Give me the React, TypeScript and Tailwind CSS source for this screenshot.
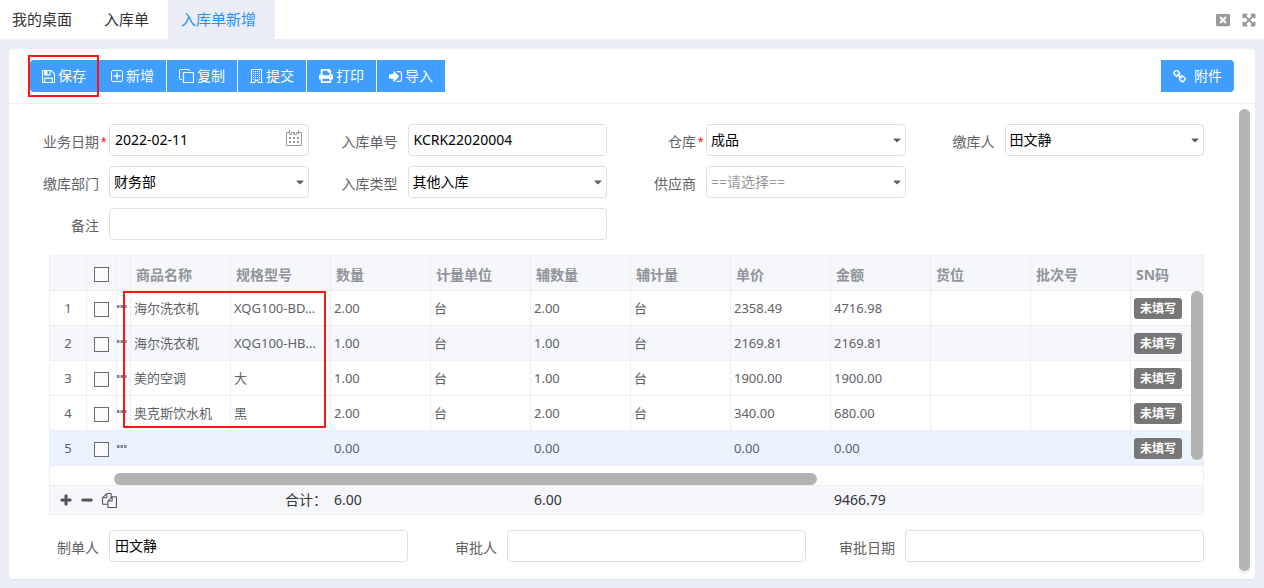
import type { ReactNode } from "react";
import { FaCaretDown, FaExpandArrowsAlt, FaMinus, FaPlus, FaPrint, FaWindowClose } from "react-icons/fa";

const SaveIcon = () => (
  <svg viewBox="128 128 1536 1536" className="h-[13px] w-[13px]" fill="currentColor" aria-hidden="true">
    <path d="M512 1536h768v-384h-768v384zm896 0h128v-896q0-14-10-38.5t-20-34.5l-281-281q-10-10-34-20t-39-10v416q0 40-28 68t-68 28h-576q-40 0-68-28t-28-68v-416h-128v1280h128v-416q0-40 28-68t68-28h832q40 0 68 28t28 68v416zm-384-928v-320q0-13-9.5-22.5t-22.5-9.5h-192q-13 0-22.5 9.5t-9.5 22.5v320q0 13 9.5 22.5t22.5 9.5h192q13 0 22.5-9.5t9.5-22.5zm640 32v928q0 40-28 68t-68 28h-1344q-40 0-68-28t-28-68v-1344q0-40 28-68t68-28h928q40 0 88 20t76 48l280 280q28 28 48 76t20 88z" />
  </svg>
);

const AddIcon = () => (
  <svg viewBox="0 0 12 12" className="h-3 w-3" fill="none" stroke="currentColor" aria-hidden="true">
    <rect x="0.5" y="0.5" width="11" height="11" rx="1.5" />
    <path d="M6 2.500v7M2.500 6h7" strokeWidth="1.3" />
  </svg>
);

const CopyIcon = () => (
  <svg viewBox="0 0 15 14" className="h-3.5 w-[15px]" fill="none" stroke="currentColor" aria-hidden="true">
    <path d="M3 10.5H1.5a1 1 0 0 1-1-1v-8a1 1 0 0 1 1-1h8a1 1 0 0 1 1 1V2" />
    <rect x="4.5" y="3.5" width="10" height="10" rx="0.5" strokeWidth="1.2" />
  </svg>
);

const BuildingIcon = () => (
  <svg viewBox="0 0 13 14" className="h-3.5 w-[13px]" fill="none" stroke="currentColor" aria-hidden="true">
    <path d="M1.5 13.500V0.5h10v13M0 13.5h5v-2h3v2h5" />
    <path d="M3 2.500h7M3 4.500h7M3 6.500h7M3 8.500h7M3 10.500h7" strokeDasharray="1 1" />
  </svg>
);

const ImportIcon = () => (
  <svg viewBox="128 128 1536 1536" className="h-[13px] w-[13px]" fill="currentColor" aria-hidden="true">
    <path d="M1312 896q0 26-19 45l-544 544q-19 19-45 19t-45-19-19-45v-288h-448q-26 0-45-19t-19-45v-384q0-26 19-45t45-19h448v-288q0-26 19-45t45-19 45 19l544 544q19 19 19 45zm352-352v704q0 119-84.5 203.5t-203.5 84.5h-320q-13 0-22.5-9.5t-9.5-22.5q0-4-1-20t-.5-26.5 3-23.5 10-19.5 20.5-6.5h320q66 0 113-47t47-113v-704q0-66-47-113t-113-47h-312l-11.5-1-11.5-3-8-5.5-7-9-2-13.5q0-4-1-20t-.5-26.5 3-23.5 10-19.5 20.5-6.5h320q119 0 203.5 84.5t84.5 203.5z" />
  </svg>
);

const LinkIcon = () => (
  <svg viewBox="64 64 1664 1664" className="h-[13px] w-[13px]" fill="currentColor" aria-hidden="true">
    <path d="M1520 1216q0-40-28-68l-208-208q-28-28-68-28-42 0-72 32 3 3 19 18.5t21.5 21.5 15 19 13 25.5 3.5 27.5q0 40-28 68t-68 28q-15 0-27.5-3.5t-25.5-13-19-15-21.5-21.5-18.5-19q-33 31-33 73 0 40 28 68l206 207q27 27 68 27 40 0 68-26l147-146q28-28 28-67zm-703-705q0-40-28-68l-206-207q-28-28-68-28-39 0-68 27l-147 146q-28 28-28 67 0 40 28 68l208 208q27 27 68 27 42 0 72-31-3-3-19-18.5t-21.5-21.5-15-19-13-25.5-3.5-27.5q0-40 28-68t68-28q15 0 27.5 3.5t25.5 13 19 15 21.5 21.5 18.5 19q33-31 33-73zm895 705q0 120-85 203l-147 146q-83 83-203 83-121 0-204-85l-206-207q-83-83-83-203 0-123 88-209l-88-88q-86 88-208 88-120 0-204-84l-208-208q-84-84-84-204t85-203l147-146q83-83 203-83 121 0 204 85l206 207q83 83 83 203 0 123-88 209l88 88q86-88 208-88 120 0 204 84l208 208q84 84 84 204z" />
  </svg>
);

const FilesIcon = () => (
  <svg viewBox="0 0 1792 1792" className="h-[15px] w-[15px]" fill="currentColor" aria-hidden="true">
    <path d="M1696 384q40 0 68 28t28 68v1216q0 40-28 68t-68 28h-960q-40 0-68-28t-28-68v-288h-544q-40 0-68-28t-28-68v-672q0-40 20-88t48-76l408-408q28-28 76-48t88-20h416q40 0 68 28t28 68v328q68-40 128-40h416zm-544 213l-299 299h299v-299zm-640-384l-299 299h299v-299zm196 647l316-316v-416h-384v416q0 40-28 68t-68 28h-416v640h512v-256q0-40 20-88t48-76zm956 804v-1152h-384v416q0 40-28 68t-68 28h-416v640h896z" />
  </svg>
);

const CalendarIcon = () => (
  <svg viewBox="0 0 16 16" className="h-4 w-4" fill="none" stroke="#999" aria-hidden="true">
    <path d="M3 2.500H.5v13h15v-13H13M3.500 4.500h2v-2h2v2M8.500 4.500h2v-2h2M3.500 0v4.500M8.500 2v2.500M12.500 0v4.500M7.500 2.500h1" />
    <path d="M3 8h10M3 12h10" strokeWidth="2" strokeDasharray="2 2" />
  </svg>
);

const tools: { label: string; icon: ReactNode }[] = [
  { label: "保存", icon: <SaveIcon /> },
  { label: "新增", icon: <AddIcon /> },
  { label: "复制", icon: <CopyIcon /> },
  { label: "提交", icon: <BuildingIcon /> },
  { label: "打印", icon: <FaPrint size={14} /> },
  { label: "导入", icon: <ImportIcon /> },
];

const columns = ["商品名称", "规格型号", "数量", "计量单位", "辅数量", "辅计量", "单价", "金额", "货位", "批次号"];

const rows = [
  ["海尔洗衣机", "XQG100-BD...", "2.00", "台", "2.00", "台", "2358.49", "4716.98", "", ""],
  ["海尔洗衣机", "XQG100-HB...", "1.00", "台", "1.00", "台", "2169.81", "2169.81", "", ""],
  ["美的空调", "大", "1.00", "台", "1.00", "台", "1900.00", "1900.00", "", ""],
  ["奥克斯饮水机", "黑", "2.00", "台", "2.00", "台", "340.00", "680.00", "", ""],
  ["", "", "0.00", "", "0.00", "", "0.00", "0.00", "", ""],
];

const rowColors = ["bg-white", "bg-[#f5f7fb]", "bg-white", "bg-white", "bg-[#ebf3ff]"];

type FieldProps = {
  id: string;
  label: string;
  value?: string;
  required?: boolean;
  kind?: "text" | "date" | "select";
  muted?: boolean;
  className?: string;
};

function Field({ id, label, value = "", required, kind = "text", muted, className = "" }: FieldProps) {
  const box = "h-8 w-full rounded border border-[#dcdfe6] bg-white text-sm";
  return (
    <div className={`flex items-center ${className}`}>
      <label htmlFor={id} className="flex w-[99px] shrink-0 justify-end pt-1 text-sm text-[#606266]">
        {label}
        <span className="w-2.5 pl-0.5 font-['Liberation_Sans',sans-serif] text-[#f00]">{required ? "*" : ""}</span>
      </label>
      <div className="relative min-w-0 flex-1">
        {kind === "select" ? (
          <>
            <select
              id={id}
              defaultValue={value}
              className={`${box} appearance-none px-1 pb-px ${muted ? "text-[#999]" : "text-black"}`}
            >
              <option>{value}</option>
            </select>
            <FaCaretDown size={12} className="pointer-events-none absolute top-2.5 right-[3px] text-[#606060]" />
          </>
        ) : (
          <input id={id} type="text" defaultValue={value} className={`${box} px-[5px] pb-0.5 text-black`} />
        )}
        {kind === "date" && (
          <button type="button" aria-label="选择日期" className="absolute top-1.5 right-[7px]">
            <CalendarIcon />
          </button>
        )}
      </div>
    </div>
  );
}

function Check({ label }: { label: string }) {
  return (
    <input
      type="checkbox"
      aria-label={label}
      className="mx-auto mt-[3px] block h-[15px] w-[15px] appearance-none border border-[#6b6b6b] bg-[#fbfbfb]"
    />
  );
}

export default function App() {
  const cell = "border-r border-b border-[#ebeef5]";
  return (
    <div className="flex min-h-screen flex-col bg-[#eaedf6] font-['Noto_Sans','Noto_Sans_CJK_SC',sans-serif]">
      <header className="flex h-[39px] items-stretch justify-between bg-white text-[15px] text-[#333]">
        <nav className="flex">
          <a href="#desktop" className="flex items-center pr-4 pl-3">我的桌面</a>
          <a href="#list" className="flex items-center pr-[19px] pl-4">入库单</a>
          <a href="#new" aria-current="page" className="flex items-center bg-[#eaedf6] pr-[19px] pl-[13px] text-[#1e90ff]">
            入库单新增
          </a>
        </nav>
        <div className="flex items-center gap-3 pr-2 text-[#999]">
          <button type="button" aria-label="关闭"><FaWindowClose size={14} /></button>
          <button type="button" aria-label="全屏"><FaExpandArrowsAlt size={14} stroke="currentColor" strokeWidth={24} /></button>
        </div>
      </header>

      <main className="mx-[9px] mt-2.5 mb-[9px] flex flex-1 flex-col rounded bg-white shadow-[0_1px_1px_#dde1e8]">
        <div className="flex h-[55px] items-center justify-between border-b border-[#ebeef5] px-[21px]">
          <div className="relative flex gap-px">
            {tools.map((t) => (
              <button
                key={t.label}
                type="button"
                className="flex h-8 items-center gap-[3px] bg-[#409eff] px-3 text-sm text-white first:rounded-l"
              >
                {t.icon}
                {t.label}
              </button>
            ))}
            <div className="pointer-events-none absolute -top-[5px] -left-0.5 h-[42px] w-[71px] border-2 border-[#ff1414]" />
          </div>
          <button type="button" className="flex h-8 items-center gap-2 rounded-r bg-[#409eff] px-3 text-sm text-white">
            <LinkIcon />
            附件
          </button>
        </div>

        <div className="flex flex-1">
          <div className="min-w-0 flex-1 pt-5 pl-px">
            <form className="grid grid-cols-4 gap-y-2.5">
              <Field id="date" label="业务日期" value="2022-02-11" kind="date" required />
              <Field id="number" label="入库单号" value="KCRK22020004" />
              <Field id="store" label="仓库" value="成品" kind="select" required />
              <Field id="payer" label="缴库人" value="田文静" kind="select" />
              <Field id="dept" label="缴库部门" value="财务部" kind="select" />
              <Field id="type" label="入库类型" value="其他入库" kind="select" />
              <Field id="supplier" label="供应商" value="==请选择==" kind="select" muted />
              <Field id="note" label="备注" className="col-span-2 col-start-1" />
            </form>

            <div className="relative mt-[15px] ml-[39px]">
              <table className="w-full table-fixed border-separate border-spacing-0 border-t border-l border-[#ebeef5] text-left">
                <colgroup>
                  <col className="w-[37px]" />
                  <col className="w-[30px]" />
                  <col className="w-3.5" />
                  {columns.map((c) => (
                    <col key={c} className="w-[100px]" />
                  ))}
                  <col />
                </colgroup>
                <thead>
                  <tr className="h-[35px] bg-[#f5f7fb] text-sm text-[#909399]">
                    <th className={cell} />
                    <th className={cell}><Check label="全选" /></th>
                    <th className={cell} />
                    {columns.map((c) => (
                      <th key={c} className={`${cell} pt-1 pl-[5px] font-bold`}>{c}</th>
                    ))}
                    <th className={`${cell} pt-1 pl-[5px] font-bold`}>SN码</th>
                  </tr>
                </thead>
                <tbody className="text-[13px] text-[#606266]">
                  {rows.map((row, i) => (
                    <tr key={i} className={`h-[35px] ${rowColors[i]}`}>
                      <td className={`${cell} pt-0.5 text-center`}>{i + 1}</td>
                      <td className={cell}><Check label={`选择第${i + 1}行`} /></td>
                      <td className={cell}>
                        <button type="button" aria-label="更多" className="mb-[3px] block">
                          <svg viewBox="0 0 10 3" className="h-[3px] w-2.5" fill="#76869b" aria-hidden="true">
                            <path d="M0 0h2.500v3H0zM3.500 0H6v3H3.500zM7 0h2.500v3H7z" />
                          </svg>
                        </button>
                      </td>
                      {row.map((v, j) => (
                        <td key={j} className={`${cell} truncate pt-0.5 pl-[3px]`}>{v}</td>
                      ))}
                      <td className={`${cell} pl-[3px]`}>
                        <span className="block h-[21px] w-12 rounded-[3px] bg-[#777] text-center text-xs leading-[21px] font-bold text-white">
                          未填写
                        </span>
                      </td>
                    </tr>
                  ))}
                  <tr className="h-5">
                    <td colSpan={14} className={`${cell} p-0 align-bottom`}>
                      <div className="ml-16 h-3 w-[61%] rounded-full bg-[#b2b2b2]" />
                    </td>
                  </tr>
                </tbody>
                <tfoot>
                  <tr className="h-[29px] bg-[#f5f7fb] text-sm text-[#333]">
                    <td colSpan={4} className="border-b border-[#ebeef5]">
                      <div className="flex items-center gap-[9px] pl-2.5 text-[#555]">
                        <button type="button" aria-label="添加行"><FaPlus size={12} stroke="currentColor" strokeWidth={32} /></button>
                        <button type="button" aria-label="删除行"><FaMinus size={12} stroke="currentColor" strokeWidth={32} /></button>
                        <button type="button" aria-label="复制行"><FilesIcon /></button>
                      </div>
                    </td>
                    <td className="border-b border-[#ebeef5] pr-1 text-right">合计：</td>
                    <td className="border-b border-[#ebeef5] pl-[3px]">6.00</td>
                    <td className="border-b border-[#ebeef5]" />
                    <td className="border-b border-[#ebeef5] pl-[3px]">6.00</td>
                    <td colSpan={2} className="border-b border-[#ebeef5]" />
                    <td className="border-b border-[#ebeef5] pl-[3px]">9466.79</td>
                    <td colSpan={3} className={cell} />
                  </tr>
                </tfoot>
              </table>
              <div className="absolute top-9 right-px h-[169px] w-3 rounded-full bg-[#b2b2b2]" />
              <div className="pointer-events-none absolute top-9 left-[74px] h-[137px] w-[203px] border-2 border-[#ff1414]" />
            </div>

            <div className="mt-[15px] grid grid-cols-3">
              <Field id="maker" label="制单人" value="田文静" />
              <Field id="approver" label="审批人" />
              <Field id="approved" label="审批日期" />
            </div>
          </div>
          <div className="mt-[5px] mr-[5px] mb-[5px] ml-[35px] w-[11px] rounded-full bg-[#f0f0f0] pb-[3px]">
            <div className="h-full rounded-full bg-[#b4b5b7]" />
          </div>
        </div>
      </main>
    </div>
  );
}
